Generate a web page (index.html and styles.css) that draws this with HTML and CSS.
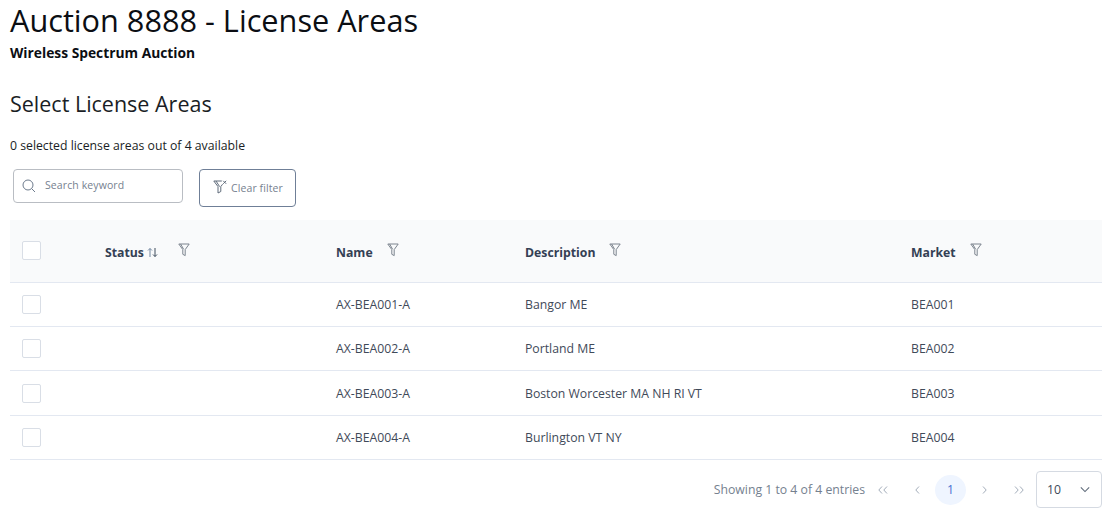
FILE: index.html
```html
<!DOCTYPE html>
<html lang="en">
<head>
<meta charset="utf-8">
<title>Auction 8888 - License Areas</title>
<link rel="stylesheet" href="styles.css">
</head>
<body>
<main class="page">
  <h1 class="title">Auction 8888 - License Areas</h1>
  <p class="subtitle">Wireless Spectrum Auction</p>
  <h2 class="section">Select License Areas</h2>
  <p class="count">0 selected license areas out of 4 available</p>
  <div class="toolbar">
    <label class="search">
      <svg class="search-icon" viewBox="0 0 14 14" width="14" height="14"><circle cx="6" cy="6" r="5" fill="none" stroke="#6c7a8c" stroke-width="1"/><path d="M9.7 9.7 13 13" fill="none" stroke="#6c7a8c" stroke-width="1"/></svg>
      <span class="search-text">Search keyword</span>
    </label>
    <button class="clear" type="button">
      <svg viewBox="0 0 14 14" width="14" height="14"><path d="M.8 1h8M.8 1l4.200 5.600V13l2.800-1.500V6.600L9.600 4.200M3 1l3.600 5.600" fill="none" stroke="#5f6b7a" stroke-width="1"/><path d="M10.200.8l3 3M13.200.8l-3 3" fill="none" stroke="#5f6b7a" stroke-width="1"/></svg>
      <span>Clear filter</span>
    </button>
  </div>
  <table class="grid">
    <colgroup>
      <col class="c-check"><col class="c-status"><col class="c-name"><col class="c-desc"><col class="c-market">
    </colgroup>
    <thead>
      <tr>
        <th><span class="box"></span></th>
        <th><span class="head">Status <svg class="sort" viewBox="0 0 11 11" width="11" height="11"><path d="M3 10V1.500M3 1.500 1 3.500M3 1.500l2 2" fill="none" stroke="#7387a0" stroke-width="1"/><path d="M8 1v8.500M8 9.500l-2-2M8 9.500l2-2" fill="none" stroke="#3f4c5c" stroke-width="1"/></svg><svg class="funnel gap-status" viewBox="0 0 12 14" width="12" height="14"><path d="M.8 1h10.400L7.200 6.600v6l-2.400-1.300V6.600zM2.600 1l3 5.200" fill="none" stroke="#7c848e" stroke-width="1"/></svg></span></th>
        <th><span class="head">Name<svg class="funnel" viewBox="0 0 12 14" width="12" height="14"><path d="M.8 1h10.400L7.200 6.600v6l-2.400-1.300V6.600zM2.600 1l3 5.200" fill="none" stroke="#7c848e" stroke-width="1"/></svg></span></th>
        <th><span class="head">Description<svg class="funnel" viewBox="0 0 12 14" width="12" height="14"><path d="M.8 1h10.400L7.200 6.600v6l-2.400-1.300V6.600zM2.600 1l3 5.200" fill="none" stroke="#7c848e" stroke-width="1"/></svg></span></th>
        <th><span class="head">Market<svg class="funnel" viewBox="0 0 12 14" width="12" height="14"><path d="M.8 1h10.400L7.200 6.600v6l-2.400-1.300V6.600zM2.600 1l3 5.200" fill="none" stroke="#7c848e" stroke-width="1"/></svg></span></th>
      </tr>
    </thead>
    <tbody>
      <tr><td><span class="box"></span></td><td></td><td>AX-BEA001-A</td><td>Bangor ME</td><td>BEA001</td></tr>
      <tr><td><span class="box"></span></td><td></td><td>AX-BEA002-A</td><td>Portland ME</td><td>BEA002</td></tr>
      <tr class="tall"><td><span class="box"></span></td><td></td><td>AX-BEA003-A</td><td>Boston Worcester MA NH RI VT</td><td>BEA003</td></tr>
      <tr><td><span class="box"></span></td><td></td><td>AX-BEA004-A</td><td>Burlington VT NY</td><td>BEA004</td></tr>
    </tbody>
  </table>
  <nav class="pager">
    <span class="entries">Showing 1 to 4 of 4 entries</span>
    <span class="nav"><svg viewBox="0 0 12 10" width="12" height="10"><path d="M5 1.500 1.800 5 5 8.500M10 1.500 6.800 5 10 8.500" fill="none" stroke="#a3adba" stroke-width="1"/></svg></span>
    <span class="nav"><svg viewBox="0 0 6 10" width="6" height="10"><path d="M5 1.500 1.800 5 5 8.500" fill="none" stroke="#a3adba" stroke-width="1"/></svg></span>
    <span class="nav current">1</span>
    <span class="nav"><svg viewBox="0 0 6 10" width="6" height="10"><path d="M1 1.500 4.200 5 1 8.500" fill="none" stroke="#a3adba" stroke-width="1"/></svg></span>
    <span class="nav"><svg viewBox="0 0 12 10" width="12" height="10"><path d="M2 1.500 5.200 5 2 8.500M7 1.500 10.200 5 7 8.500" fill="none" stroke="#a3adba" stroke-width="1"/></svg></span>
    <span class="size"><span>10</span><svg viewBox="0 0 12 8" width="10" height="7"><path d="M1 1.500 6 6.500 11 1.500" fill="none" stroke="#5f6b7a" stroke-width="1.300"/></svg></span>
  </nav>
</main>
</body>
</html>
```

FILE: styles.css
```css
* { box-sizing: border-box; }
html, body { margin: 0; padding: 0; background: #fff; }
body { font-family: "Open Sans", "Noto Sans", sans-serif; color: #0f1217; overflow: hidden; }
.page { padding: 0 15px 0 10px; }
.title { margin: 0; font-size: 30.700px; line-height: 41px; font-weight: 400; color: #0b0e13; }
.subtitle { margin: 1px 0 0; font-size: 13.800px; line-height: 21px; font-weight: 700; color: #0b0e13; }
.section { margin: 27px 0 0; font-size: 21.500px; line-height: 28px; font-weight: 400; color: #1a1e25; }
.count { margin: 20px 0 0; font-size: 12.250px; line-height: 16px; color: #1a1e25; }
.toolbar { display: flex; align-items: flex-start; gap: 16px; margin: 15px 0 0 3px; }
.search { display: flex; align-items: center; gap: 9px; width: 170px; height: 34px; padding: 0 0 2px 8px; border: 1px solid #b9bdc3; border-radius: 4px; }
.search-icon { margin-top: 2px; }
.search-text { font-size: 10.500px; color: #76818f; letter-spacing: .1px; }
.clear { display: flex; align-items: center; gap: 4px; width: 97px; height: 38px; padding: 0 0 2px 13px; border: 1px solid #6f7f97; border-radius: 4px; background: #fff; font: 400 10.500px "Open Sans", sans-serif; color: #76818f; letter-spacing: .1px; }
.clear span { margin-top: 2px; }
.grid { width: 1092px; margin-top: 13px; border-collapse: collapse; table-layout: fixed; font-size: 12.250px; color: #3f4a59; }
.c-check { width: 95px; }
.c-status { width: 231px; }
.c-name { width: 189px; }
.c-desc { width: 386px; }
.c-market { width: 191px; }
th { height: 62px; padding: 0; background: #f9fafb; border-bottom: 1px solid #e3e8f1; text-align: left; vertical-align: middle; font-weight: 700; color: #344054; }
td { height: 44px; padding: 0; border-bottom: 1px solid #e3e8f1; vertical-align: middle; }
th:first-child, td:first-child { padding-left: 12px; }
.tall td { height: 45px; padding-top: 2px; }
.box { display: block; width: 19px; height: 19px; border: 1px solid #d9dee6; border-radius: 2px; background: #fff; }
.head { display: flex; align-items: center; position: relative; top: 2px; }
.sort { margin-left: 3px; }
.funnel { margin-left: 14px; position: relative; top: -3px; }
.gap-status { margin-left: 20px; }
.pager { display: flex; align-items: center; justify-content: flex-end; height: 58px; margin-top: 1px; font-size: 12.250px; color: #75818f; }
.nav { display: flex; align-items: center; justify-content: center; width: 32px; height: 30px; margin-left: 2px; }
.current { border-radius: 50%; width: 31px; margin-right: 1px; background: #eff5ff; color: #4a6fd0; }
.size { display: flex; align-items: center; justify-content: space-between; width: 66px; height: 37px; margin-left: 1px; padding: 0 11px 0 10px; border: 1px solid #d5dae2; border-radius: 4px; font-size: 12.250px; color: #3f4a59; }
```
